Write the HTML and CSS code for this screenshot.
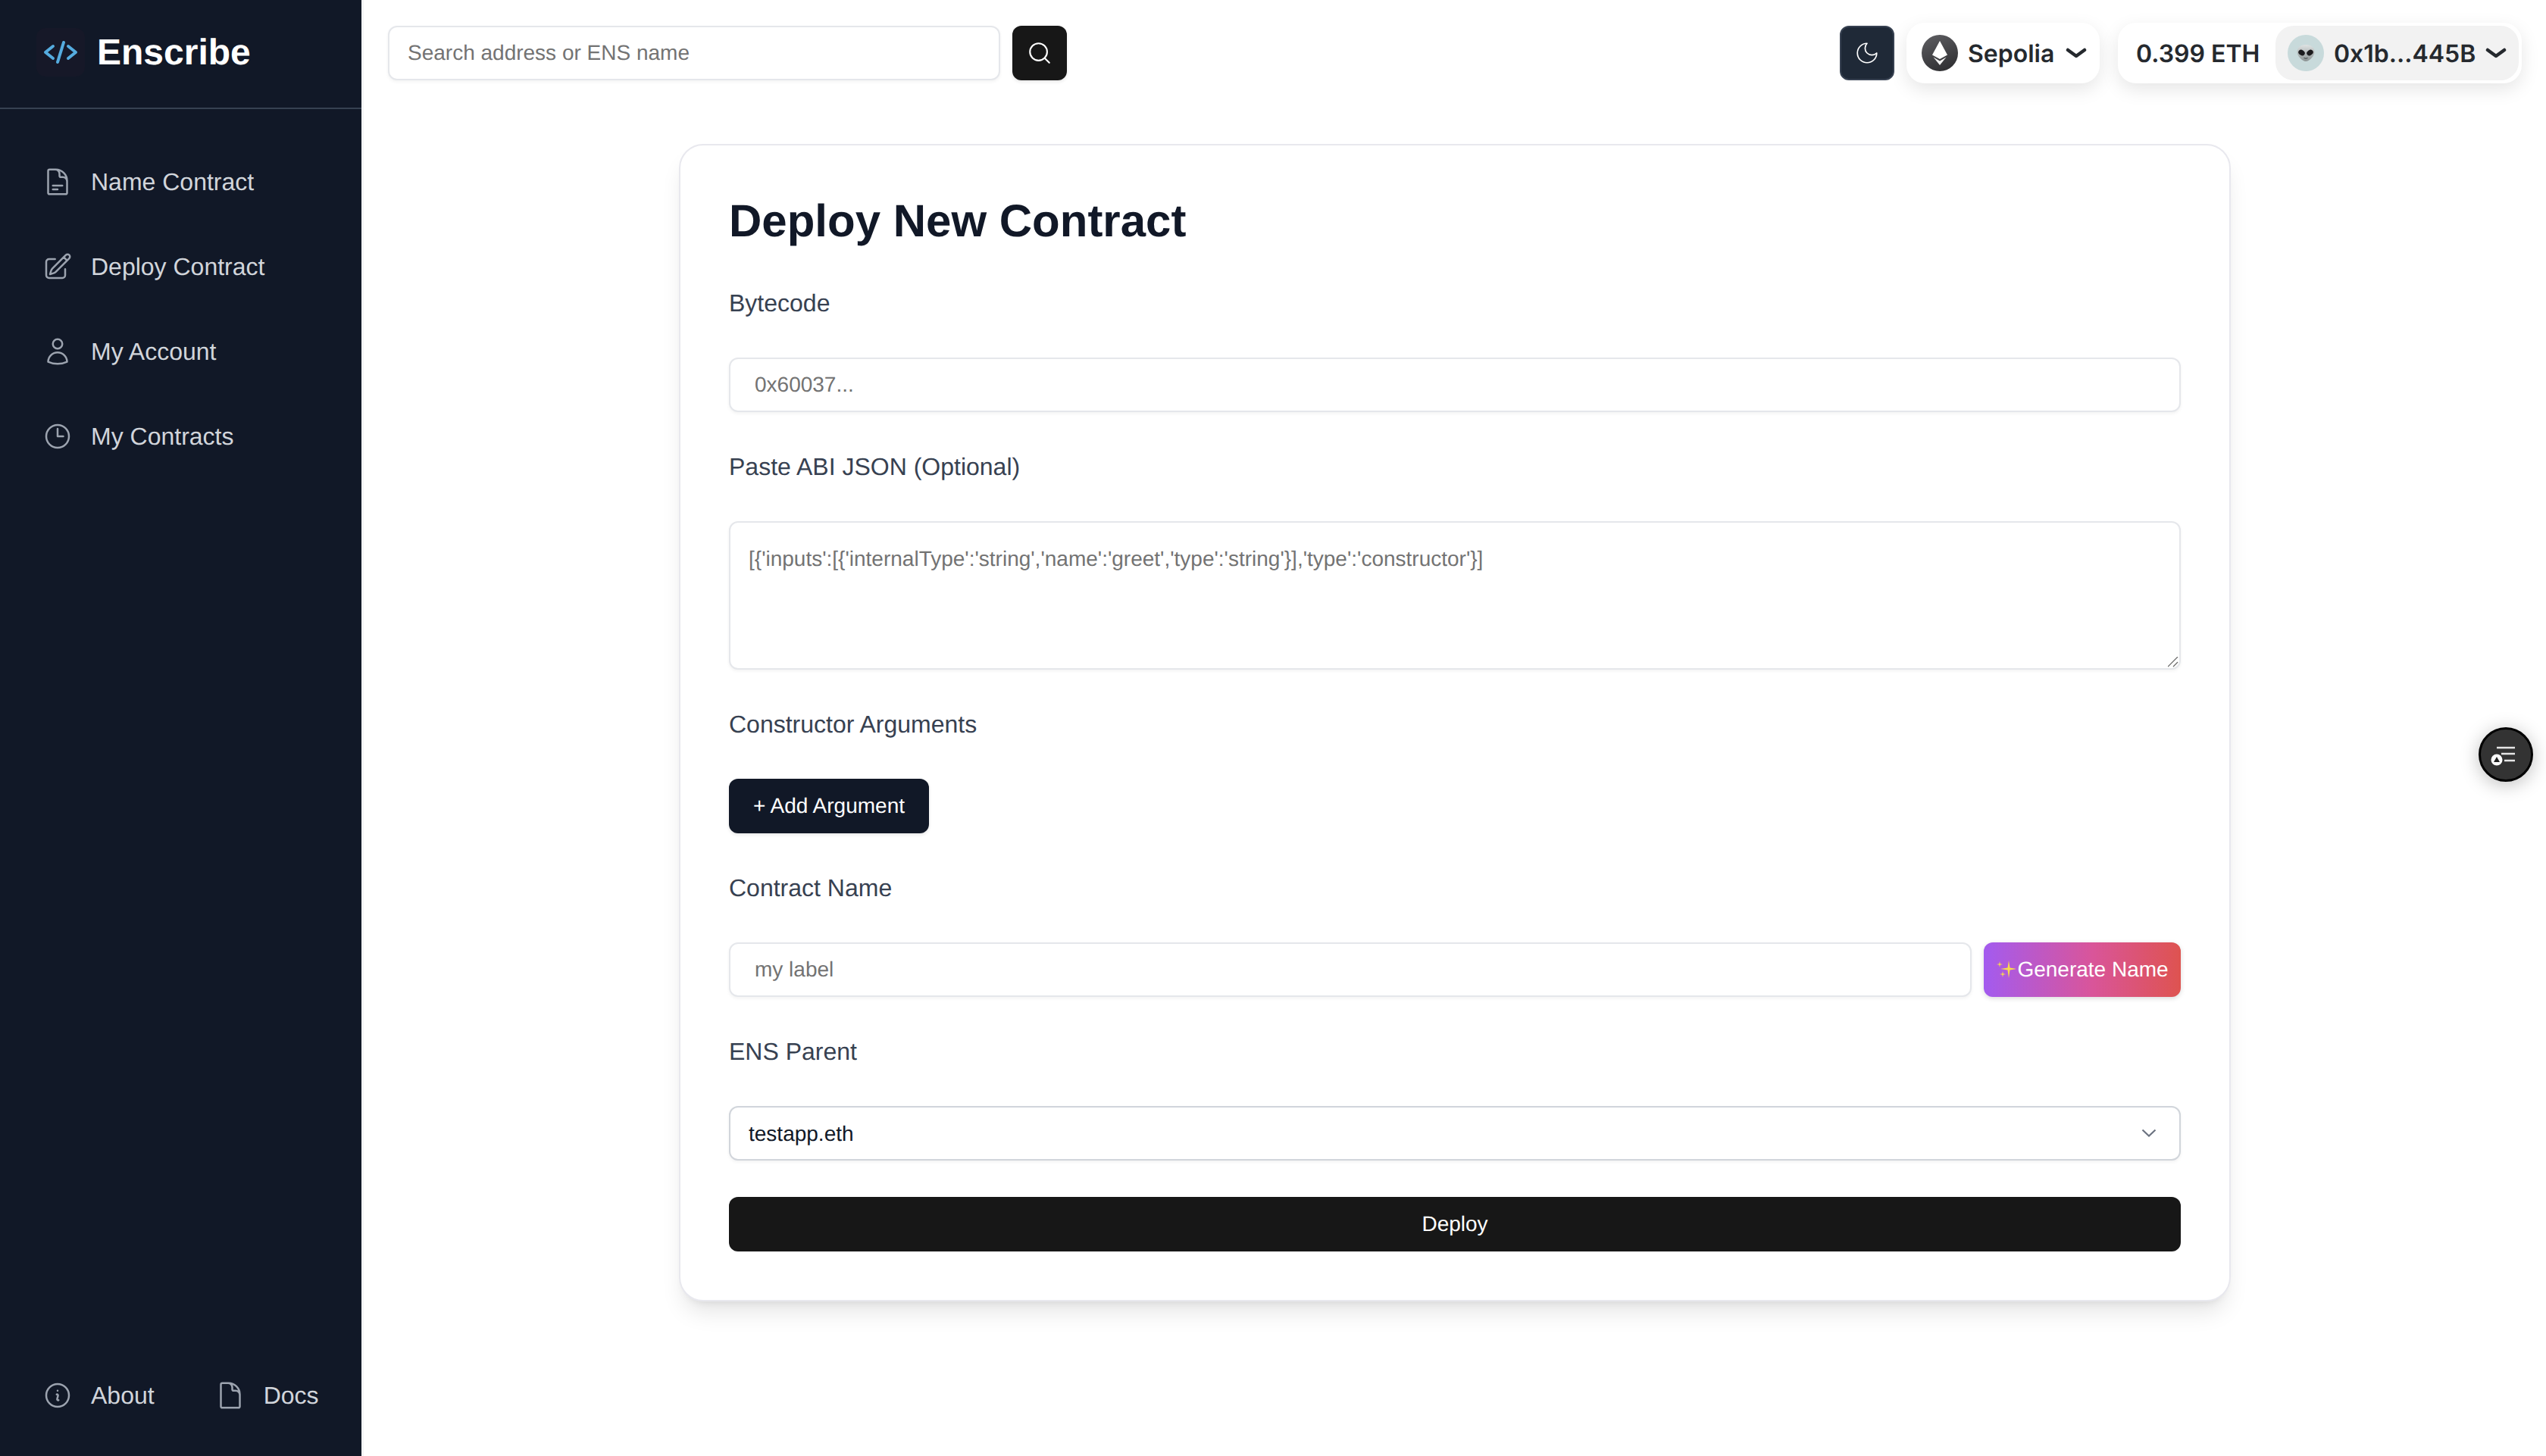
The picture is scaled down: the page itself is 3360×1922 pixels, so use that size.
FILE: index.html
```html
<!DOCTYPE html>
<html>
  <head>
    <title>Enscribe</title>
    <link rel="stylesheet" href="styles.css">
  </head>
  <body>
    <aside class="sidebar">
      <div class="brand">
        <span class="brand-logo">
          <svg viewBox="0 0 64 64" width="64" height="64" fill="none" stroke="#55acdf" stroke-width="4" stroke-linecap="round" stroke-linejoin="round">
            <path d="M22 24 12 32l10 8" />
            <path d="M36 19 28 45" />
            <path d="m42 24 10 8-10 8" />
          </svg>
        </span>
        <span class="brand-name">Enscribe</span>
      </div>
      <nav class="nav">
        <a class="nav-item">
          <svg class="nav-icon" viewBox="0 0 24 24"><path d="M19.5 14.25v-2.625a3.375 3.375 0 0 0-3.375-3.375h-1.5A1.125 1.125 0 0 1 13.5 7.125v-1.5a3.375 3.375 0 0 0-3.375-3.375H8.25m0 12.75h7.5m-7.5 3H12M10.5 2.25H5.625c-.621 0-1.125.504-1.125 1.125v17.25c0 .621.504 1.125 1.125 1.125h12.75c.621 0 1.125-.504 1.125-1.125V11.25a9 9 0 0 0-9-9Z" /></svg>
          Name Contract
        </a>
        <a class="nav-item">
          <svg class="nav-icon" viewBox="0 0 24 24"><path d="m16.862 4.487 1.687-1.688a1.875 1.875 0 1 1 2.652 2.652L10.582 16.07a4.5 4.5 0 0 1-1.897 1.13L6 18l.8-2.685a4.5 4.5 0 0 1 1.13-1.897l8.932-8.931Zm0 0L19.5 7.125M18 14v4.75A2.25 2.25 0 0 1 15.75 21H5.25A2.25 2.25 0 0 1 3 18.75V8.25A2.25 2.25 0 0 1 5.25 6H10" /></svg>
          Deploy Contract
        </a>
        <a class="nav-item">
          <svg class="nav-icon" viewBox="0 0 24 24"><path d="M15.75 6a3.75 3.75 0 1 1-7.5 0 3.75 3.75 0 0 1 7.5 0ZM4.501 20.118a7.5 7.5 0 0 1 14.998 0A17.933 17.933 0 0 1 12 21.75c-2.676 0-5.216-.584-7.499-1.632Z" /></svg>
          My Account
        </a>
        <a class="nav-item">
          <svg class="nav-icon" viewBox="0 0 24 24"><path d="M12 6v6h4.5m4.5 0a9 9 0 1 1-18 0 9 9 0 0 1 18 0Z" /></svg>
          My Contracts
        </a>
      </nav>
      <div class="sidebar-footer">
        <a class="nav-item">
          <svg class="nav-icon" viewBox="0 0 24 24"><path d="m11.25 11.25.041-.02a.75.75 0 0 1 1.063.852l-.708 2.836a.75.75 0 0 0 1.063.853l.041-.021M21 12a9 9 0 1 1-18 0 9 9 0 0 1 18 0Zm-9-3.75h.008v.008H12V8.25Z" /></svg>
          About
        </a>
        <a class="nav-item">
          <svg class="nav-icon" viewBox="0 0 24 24"><path d="M19.5 14.25v-2.625a3.375 3.375 0 0 0-3.375-3.375h-1.5A1.125 1.125 0 0 1 13.5 7.125v-1.5a3.375 3.375 0 0 0-3.375-3.375H8.25m2.25 0H5.625c-.621 0-1.125.504-1.125 1.125v17.25c0 .621.504 1.125 1.125 1.125h12.75c.621 0 1.125-.504 1.125-1.125V11.25a9 9 0 0 0-9-9Z" /></svg>
          Docs
        </a>
      </div>
    </aside>

    <div class="main">
      <header class="topbar">
        <div class="search">
          <input class="search-input" type="text" placeholder="Search address or ENS name" />
          <button class="search-btn">
            <svg viewBox="0 0 24 24" width="34" height="34" fill="none" stroke="#fff" stroke-width="1.5" stroke-linecap="round" stroke-linejoin="round">
              <circle cx="11" cy="11" r="8" />
              <path d="m21 21-4.3-4.3" />
            </svg>
          </button>
        </div>
        <div class="wallet">
          <button class="theme-btn">
            <svg viewBox="0 0 24 24" width="34" height="34" fill="none" stroke="#fff" stroke-width="1.2" stroke-linecap="round" stroke-linejoin="round">
              <path d="M12 3a6 6 0 0 0 9 9 9 9 0 1 1-9-9Z" />
            </svg>
          </button>
          <div class="pill chain">
            <svg class="pill-icon" viewBox="0 0 48 48">
              <defs>
                <linearGradient id="eth-bg" x1="0.2" y1="0" x2="0.6" y2="1">
                  <stop offset="0" stop-color="#5c5c60" />
                  <stop offset="1" stop-color="#303033" />
                </linearGradient>
              </defs>
              <circle cx="24" cy="24" r="24" fill="url(#eth-bg)" />
              <path d="M24 8 14 26.500 24 32l10-5.500Z" fill="#fff" />
              <path d="M15.500 29.500 24 34.500l8.500-5L24 40Z" fill="#f2f2f2" />
            </svg>
            <span>Sepolia</span>
            <svg class="caret" viewBox="0 0 28 16"><path d="M3 4 14 12 25 4" /></svg>
          </div>
          <div class="pill account">
            <span class="balance">0.399 ETH</span>
            <div class="address">
              <svg class="pill-icon" viewBox="0 0 48 48">
                <defs>
                  <linearGradient id="alien-head" x1="0" y1="0" x2="0" y2="1">
                    <stop offset="0" stop-color="#dfe3e3" />
                    <stop offset="1" stop-color="#8a9292" />
                  </linearGradient>
                </defs>
                <circle cx="24" cy="24" r="24" fill="#c8dadb" />
                <path d="M24 13c7 0 11.500 4 11.500 9.500 0 5.500-7 12.500-11.500 12.500S12.500 28 12.500 22.500C12.500 17 17 13 24 13Z" fill="url(#alien-head)" />
                <ellipse cx="18.500" cy="23.500" rx="4.500" ry="3.500" fill="#1c1c1e" transform="rotate(35 18.500 23.500)" />
                <ellipse cx="29.500" cy="23.500" rx="4.500" ry="3.500" fill="#1c1c1e" transform="rotate(-35 29.500 23.500)" />
                <path d="M21.500 30.500q2.500 1.500 5 0" fill="none" stroke="#3a3f3f" stroke-width="1" />
              </svg>
              <span>0x1b...445B</span>
              <svg class="caret" viewBox="0 0 28 16"><path d="M3 4 14 12 25 4" /></svg>
            </div>
          </div>
        </div>
      </header>

      <main class="content">
        <section class="card">
          <h1>Deploy New Contract</h1>
          <form class="deploy-form">
            <label>Bytecode</label>
            <input class="field" type="text" placeholder="0x60037..." />

            <label>Paste ABI JSON (Optional)</label>
            <textarea class="field field-area" placeholder="[{'inputs':[{'internalType':'string','name':'greet','type':'string'}],'type':'constructor'}]"></textarea>

            <label>Constructor Arguments</label>
            <div><button type="button" class="add-btn">+ Add Argument</button></div>

            <label>Contract Name</label>
            <div class="name-row">
              <input class="field" type="text" placeholder="my label" />
              <button type="button" class="generate-btn">
                <svg viewBox="0 0 26 24" width="26" height="24" fill="#fadb4b">
                  <path d="M17 0 18.500 9.500 28 11 18.500 12.500 17 23 15.500 12.500 6 11 15.500 9.500Z" />
                  <path d="M5 1 5.700 4.300 9 5 5.700 5.700 5 9 4.300 5.700 1 5 4.300 4.300Z" />
                  <path d="M9 14 9.700 17.300 13 18 9.700 18.700 9 22 8.300 18.700 5 18 8.300 17.300Z" />
                </svg>
                Generate Name
              </button>
            </div>

            <label>ENS Parent</label>
            <select class="field field-select">
              <option>testapp.eth</option>
            </select>

            <button type="button" class="deploy-btn">Deploy</button>
          </form>
        </section>
      </main>
    </div>

    <button class="float-btn">
      <svg viewBox="0 0 66 66" width="66" height="66">
        <path d="M21 24h24M27 32h18M31 41h14" stroke="#e5e5e5" stroke-width="2.500" fill="none" />
        <circle cx="21" cy="40" r="7.500" fill="#fff" />
        <path d="M21 36 25 43H17Z" fill="#222" />
      </svg>
    </button>
  </body>
</html>
```

FILE: styles.css
```css
* {
  box-sizing: border-box;
}

body {
  margin: 0;
  height: 100vh;
  display: flex;
  background-color: #fff;
  font-family: "Liberation Sans", Arial, sans-serif;
  color: #111827;
  overflow: hidden;
  text-rendering: geometricPrecision;
}

/* Sidebar */
.sidebar {
  width: 480px;
  flex-shrink: 0;
  display: flex;
  flex-direction: column;
  background-color: #111827;
  border-right: 3px solid #f3f4f6;
}

.brand {
  height: 144px;
  display: flex;
  align-items: center;
  gap: 16px;
  padding: 0 48px 4px;
  border-bottom: 2px solid #374151;
}

.brand-logo {
  width: 64px;
  height: 64px;
  border-radius: 12px;
  background-color: #161828;
}

.brand-logo svg {
  display: block;
}

.brand-name {
  font-size: 48px;
  font-weight: 700;
  color: #fff;
}

.nav {
  display: flex;
  flex-direction: column;
  gap: 32px;
  padding: 56px 56px 0;
}

.nav-item {
  height: 80px;
  display: flex;
  align-items: center;
  gap: 24px;
  font-size: 32px;
  color: #d1d5db;
}

.nav-icon {
  width: 40px;
  height: 40px;
  flex-shrink: 0;
  fill: none;
  stroke: #9ca3af;
  stroke-width: 1.5;
  stroke-linecap: round;
  stroke-linejoin: round;
}

.sidebar-footer {
  margin-top: auto;
  display: flex;
  gap: 80px;
  padding: 0 56px 40px;
}

/* Top bar */
.main {
  flex: 1;
  min-width: 0;
}

.topbar {
  height: 142px;
  padding: 0 32px 2px;
  display: flex;
  align-items: center;
  justify-content: space-between;
}

.search {
  display: flex;
  gap: 16px;
}

.search-input {
  width: 808px;
  height: 72px;
  padding: 0 24px;
  border: 2px solid #e5e7eb;
  border-radius: 12px;
  box-shadow: 0 2px 4px rgba(0, 0, 0, 0.05);
  font-family: inherit;
  font-size: 28px;
  outline: none;
  text-rendering: geometricPrecision;
}

.search-input::placeholder,
.field::placeholder {
  color: #737373;
  opacity: 1;
}

.search-btn {
  width: 72px;
  height: 72px;
  padding: 0;
  border: none;
  border-radius: 12px;
  background-color: #171717;
  box-shadow: 0 2px 4px rgba(0, 0, 0, 0.1);
  display: flex;
  align-items: center;
  justify-content: center;
}

.wallet {
  display: flex;
  align-items: center;
  font-family: Inter, sans-serif;
  font-size: 32px;
  font-weight: 600;
  color: #25292e;
}

.theme-btn {
  width: 72px;
  height: 72px;
  padding: 0;
  margin-right: 16px;
  border: 2px solid #374151;
  border-radius: 12px;
  background-color: #1f2937;
  display: flex;
  align-items: center;
  justify-content: center;
}

.pill {
  height: 80px;
  display: flex;
  align-items: center;
  border-radius: 24px;
  background-color: #fff;
  box-shadow: 0 8px 24px rgba(0, 0, 0, 0.1);
}

.pill-icon {
  width: 48px;
  height: 48px;
  flex-shrink: 0;
}

.caret {
  width: 28px;
  height: 16px;
  fill: none;
  stroke: #25292e;
  stroke-width: 4.500;
  stroke-linecap: round;
  stroke-linejoin: round;
}

.chain {
  width: 255px;
  padding-left: 20px;
  margin-right: 24px;
  gap: 13px;
}

.chain .caret {
  margin-left: 2px;
}

.account {
  width: 533px;
  padding: 0 4px 0 24px;
  justify-content: space-between;
}

.address {
  width: 321px;
  height: 72px;
  padding-left: 16px;
  border-radius: 24px;
  background-color: #f2f2f2;
  display: flex;
  align-items: center;
  gap: 13px;
}

/* Form card */
.content {
  padding: 48px 0;
}

.card {
  width: 2048px;
  margin: 0 auto;
  padding: 64px;
  background-color: #fff;
  border: 2px solid #e8e8ee;
  border-radius: 32px;
  box-shadow: 0 20px 30px -6px rgba(0, 0, 0, 0.1), 0 8px 12px -8px rgba(0, 0, 0, 0.1);
}

.card h1 {
  margin: 0 0 48px;
  font-size: 60px;
  line-height: 72px;
  font-weight: 700;
}

.deploy-form {
  display: flex;
  flex-direction: column;
  gap: 48px;
}

.deploy-form label {
  font-size: 32px;
  line-height: 48px;
  color: #374151;
}

.field {
  display: block;
  width: 100%;
  height: 72px;
  padding: 0 32px;
  background-color: #fff;
  border: 2px solid #e5e7eb;
  border-radius: 12px;
  box-shadow: 0 2px 4px rgba(0, 0, 0, 0.05);
  font-family: inherit;
  font-size: 28px;
  outline: none;
  text-rendering: geometricPrecision;
}

.field-area {
  height: 196px;
  padding: 28px 24px 24px;
  line-height: 40px;
  resize: vertical;
}

.field-area::-webkit-resizer {
  background-image: url("data:image/svg+xml,%3Csvg xmlns='http://www.w3.org/2000/svg' viewBox='0 0 15 15'%3E%3Cpath d='M0 13 13 0M7 13l6-6' fill='none' stroke='%23666' stroke-width='1.200'/%3E%3C/svg%3E");
}

.field-select {
  padding: 0 24px;
  border-color: #d1d5db;
  color: #111827;
  appearance: none;
  background-image: url("data:image/svg+xml,%3Csvg xmlns='http://www.w3.org/2000/svg' viewBox='0 0 20 12'%3E%3Cpath d='M1.500 1.500 10 9.500l8.500-8' fill='none' stroke='%236b7280' stroke-width='2.200'/%3E%3C/svg%3E");
  background-repeat: no-repeat;
  background-position: right 30px center;
  background-size: 20px 12px;
}

.add-btn {
  display: block;
  width: 264px;
  height: 72px;
  padding: 0;
  border: none;
  border-radius: 12px;
  background-color: #111827;
  box-shadow: 0 2px 4px rgba(0, 0, 0, 0.1);
  font-family: inherit;
  font-size: 28px;
  color: #fff;
  text-rendering: geometricPrecision;
}

.name-row {
  display: flex;
  gap: 16px;
}

.generate-btn {
  width: 260px;
  height: 72px;
  flex-shrink: 0;
  padding: 0;
  border: none;
  border-radius: 12px;
  background-image: linear-gradient(90deg, #a35bef, #d9559a 55%, #de5350);
  box-shadow: 0 2px 6px rgba(0, 0, 0, 0.15);
  display: flex;
  align-items: center;
  justify-content: center;
  gap: 2px;
  font-family: inherit;
  font-size: 28px;
  color: #fff;
  text-rendering: geometricPrecision;
}

.deploy-btn {
  width: 100%;
  height: 72px;
  border: none;
  border-radius: 12px;
  background-color: #171717;
  font-family: inherit;
  font-size: 28px;
  color: #fff;
  text-rendering: geometricPrecision;
}

/* Floating button on the right edge */
.float-btn {
  position: fixed;
  top: 960px;
  right: 17px;
  width: 72px;
  height: 72px;
  padding: 0;
  border: 3px solid #000;
  border-radius: 50%;
  background-color: #333;
  box-shadow: 0 4px 24px rgba(0, 0, 0, 0.25);
}

.float-btn svg {
  display: block;
}
```
